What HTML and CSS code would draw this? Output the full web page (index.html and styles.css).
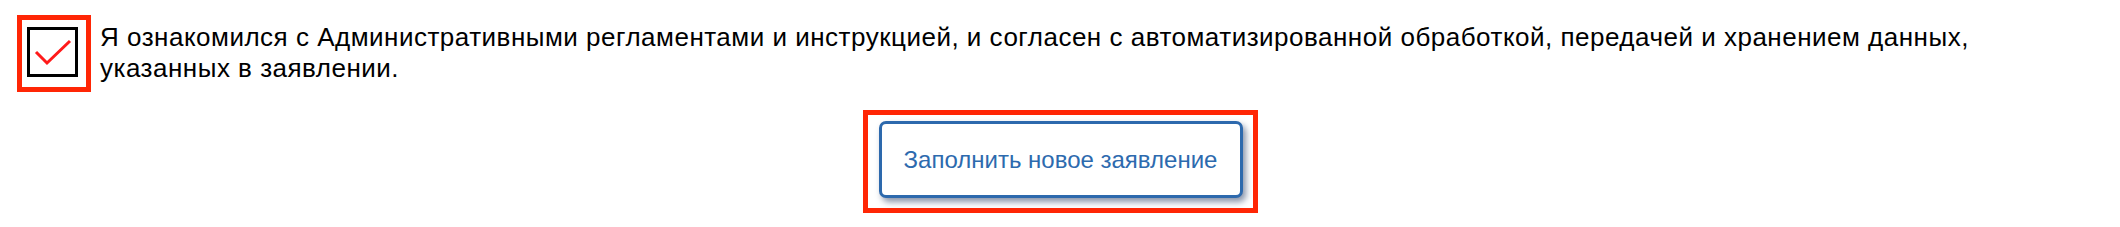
FILE: index.html
```html
<!DOCTYPE html>
<html lang="ru">
<head>
  <meta charset="UTF-8">
  <title>Согласие</title>
  <link rel="stylesheet" href="styles.css">
</head>
<body>
<div class="agree">
  <div class="mark mark-check">
    <span class="checkbox">
      <svg width="45" height="44" viewBox="0 0 45 44">
        <polyline points="6,22 17,33 40,11" fill="none" stroke="#ff1a1a" stroke-width="3"/>
      </svg>
    </span>
  </div>
  <p class="agree-text">Я ознакомился с Административными регламентами и инструкцией, и согласен с автоматизированной обработкой, передачей и хранением данных, указанных в заявлении.</p>
</div>
<div class="actions">
  <div class="mark mark-btn">
    <button class="btn" type="button">Заполнить новое заявление</button>
  </div>
</div>
</body>
</html>
```

FILE: styles.css
```css
body {
  margin: 0;
  font-family: "Liberation Sans", Arial, sans-serif;
  color: #000;
  background: #fff;
}

.agree {
  display: flex;
  align-items: flex-start;
  padding: 15px 0 0 17px;
}

.mark {
  border: 5px solid #ff2605;
}

.mark-check {
  flex: none;
  padding: 7px 8px 10px 5px;
}

.checkbox {
  display: block;
  width: 45px;
  height: 44px;
  border: 3px solid #000;
}

.checkbox svg {
  display: block;
}

.agree-text {
  margin: 7px 0 0 9px;
  font-size: 26px;
  letter-spacing: 0.5px;
  line-height: 31px;
  max-width: 1890px;
}

.actions {
  display: flex;
  justify-content: center;
  margin-top: 18px;
}

.mark-btn {
  padding: 6px 10px 10px 11px;
}

.btn {
  display: block;
  width: 364px;
  height: 77px;
  border: 3px solid #2d69ad;
  border-radius: 7px;
  background: #fff;
  color: #2d6aae;
  font-family: "Liberation Sans", Arial, sans-serif;
  font-size: 24px;
  box-shadow: 3px 4px 6px rgba(40, 60, 100, 0.55);
  cursor: pointer;
}
```
